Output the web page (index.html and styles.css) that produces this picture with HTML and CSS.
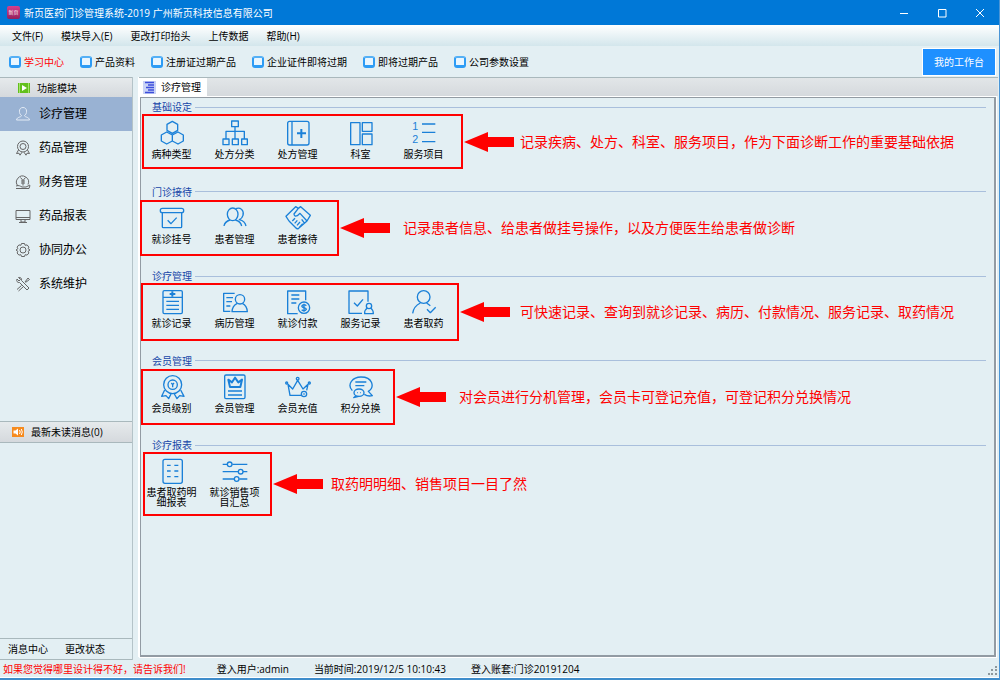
FILE: index.html
```html
<!DOCTYPE html>
<html lang="zh-CN">
<head>
<meta charset="utf-8">
<title>新页医药门诊管理系统-2019</title>
<link rel="stylesheet" href="styles.css">
</head>
<body>
<div class="window">
  <header class="titlebar">
    <span class="app-icon">新页</span>
    <h1 class="app-title">新页医药门诊管理系统-2019 广州新页科技信息有限公司</h1>
    <button class="win-btn" aria-label="最小化"><svg viewBox="0 0 10 10"><path d="M1 5.5h8"/></svg></button>
    <button class="win-btn" aria-label="最大化"><svg viewBox="0 0 10 10"><path d="M1.5 1.5h7.500v7.500h-7.500z"/></svg></button>
    <button class="win-btn" aria-label="关闭"><svg viewBox="0 0 10 10"><path d="M1 1l8 8M9 1l-8 8"/></svg></button>
  </header>

  <nav class="menubar">
    <button>文件(F)</button>
    <button>模块导入(E)</button>
    <button>更改打印抬头</button>
    <button>上传数据</button>
    <button>帮助(H)</button>
  </nav>

  <div class="toolbar">
    <button class="tool tool-hot"><i class="tool-icon"></i>学习中心</button>
    <button class="tool"><i class="tool-icon"></i>产品资料</button>
    <button class="tool"><i class="tool-icon"></i>注册证过期产品</button>
    <button class="tool"><i class="tool-icon"></i>企业证件即将过期</button>
    <button class="tool"><i class="tool-icon"></i>即将过期产品</button>
    <button class="tool"><i class="tool-icon"></i>公司参数设置</button>
    <button class="desk-btn">我的工作台</button>
  </div>

  <div class="body">
    <aside class="sidebar">
      <h2 class="side-head side-head-modules">
        <svg class="head-icon" viewBox="0 0 12 12"><path fill="#62c01c" d="M0 1h12v10H0z"/><path fill="#a5e36c" d="M1 1h1v10H1zM10 1h1v10h-1z"/><path fill="#fff" d="M4 3l5 3-5 3z"/></svg>
        功能模块
      </h2>
      <nav class="modules">
        <div class="module-list">
          <button class="module module-active"><svg viewBox="0 0 16 16"><path d="M8 1.500c5 0 4 7 1.500 8 0 2 4.500 1 5 4.500h-13c.5-3.500 5-2.500 5-4.500C4 8.500 3 1.500 8 1.500z"/></svg>诊疗管理</button>
          <button class="module"><svg viewBox="0 0 16 16"><circle cx="8" cy="6.500" r="5.500"/><circle cx="8" cy="6.500" r="3"/><path d="M3.500 10l-2 3.500 2.500-.3 1 2 2-3M12.500 10l2 3.500-2.500-.3-1 2-2-3"/></svg>药品管理</button>
          <button class="module"><svg viewBox="0 0 16 16"><path d="M3 12A6 6 0 1 1 13 10.500M5.500 3.500L8 6.500l2.500-3M8 6.500v5M6 7h4M6 9h4M1 12c3-1 4 0 6 1h4l4-2M1 14.500h13l1-3"/></svg>财务管理</button>
          <button class="module"><svg viewBox="0 0 16 16"><path d="M1 2.500h14v9H1zM1 9.500h14M6 11.500v2.500h4v-2.500M4 14.500h8"/></svg>药品报表</button>
          <button class="module"><svg viewBox="0 0 16 16"><circle cx="8" cy="8" r="3"/><path d="M6.500 1.500h3l.6 1.800 2-.4 1.800 2.200-.8 1.600 1.900 1.300-1.900 1.300.8 1.700-1.800 2.100-2-.4-.6 1.800h-3l-.6-1.800-2 .4-1.800-2.100.8-1.700L1 8l1.900-1.300-.8-1.600 1.800-2.200 2 .4z"/></svg>协同办公</button>
          <button class="module"><svg viewBox="0 0 16 16"><path d="M2 3l2 2 1.500-1.500-2-2c2-.5 3.500 1 3 3L14 12l-2 2-7.500-7.500C2.500 7 1 5 2 3zM10 6l3-4 1.500 1.500-4 3M6.500 9.500l-4.500 4M8 11l-4.500 4"/></svg>系统维护</button>
        </div>
      </nav>
      <h2 class="side-head side-head-messages">
        <svg class="head-icon" viewBox="0 0 12 12"><path fill="#f68b1f" d="M0 1h12v10H0z"/><path fill="#fff" d="M1.500 4.500h2L6 2.500v7L3.500 7.500h-2z"/><path d="M7.500 4q1.500 2 0 4M9.300 3q2 3 0 6" fill="none" stroke="#fff"/></svg>
        最新未读消息(0)
      </h2>
      <div class="messages"></div>
      <div class="side-foot"><button>消息中心</button><button>更改状态</button></div>
    </aside>

    <main class="workspace">
      <div class="tabs">
        <button class="tab">
          <svg viewBox="0 0 13 13"><path fill="#c9d3f6" d="M0 0h13v13H0z"/><path stroke="#3d4edb" stroke-width="1.500" d="M2 1.500h9M5 4h6M3 6.500h8M5 9h6M2 11.500h9"/></svg>
          诊疗管理
        </button>
      </div>

      <div class="panel">
        <div class="groups">
          <section class="group">
            <h3>基础设定</h3>
            <div class="items">
              <button class="item"><svg viewBox="0 0 78 78"><path d="M40 4l16 9v18l-16 9-16-9V13zM23 36l17 9v18l-17 9-16-9V45zM57 36l16 9v18l-16 9-17-9V45z"/></svg><span>病种类型</span></button>
              <button class="item"><svg viewBox="0 0 78 78"><path d="M29 3h20v17H29zM39 20v36M12 56V34h55v22M3 57h18v17H3zM31 57h18v17H31zM59 57h17v17H59z"/></svg><span>处方分类</span></button>
              <button class="item"><svg viewBox="0 0 78 78"><rect x="8" y="4" width="64" height="71" rx="6"/><path d="M21 4v71"/><path class="bold" d="M36 40h27M49 27v27"/></svg><span>处方管理</span></button>
              <button class="item"><svg viewBox="0 0 78 78"><path d="M8 8h28v66H8zM43 8h29v26H43zM43 42h29v32H43z"/></svg><span>科室</span></button>
              <button class="item"><svg viewBox="0 0 78 78"><text x="4" y="31">1</text><text x="4" y="70">2</text><path d="M33 12h40M33 37h40M33 65h40"/></svg><span>服务项目</span></button>
            </div>
          </section>

          <section class="group">
            <h3>门诊接待</h3>
            <div class="items">
              <button class="item"><svg viewBox="0 0 78 78"><rect x="4" y="10" width="70" height="13" rx="6"/><path d="M10 23v42q0 3 3 3h52q3 0 3-3V23M26 46l10 10 17-18"/></svg><span>就诊挂号</span></button>
              <button class="item"><svg viewBox="0 0 78 78"><ellipse cx="32" cy="28" rx="16" ry="19"/><path d="M6 63q2-13 18-18M40 45q16 4 19 18M41 11c14-6 26 5 22 20-2 7-6 11-11 13 12 3 18 9 20 19"/></svg><span>患者管理</span></button>
              <button class="item"><svg viewBox="0 0 78 78"><path d="M40 10l-8-5-29 29 9 14M40 10l7-5 29 26-10 17-25 22q-5 3-8-1L12 48M40 10L27 27q1 9 10 5l8-7 21 23M29 55l8-9M36 61l9-10M43 67l10-11M22 48l8-8M50 43l9 12"/></svg><span>患者接待</span></button>
            </div>
          </section>

          <section class="group">
            <h3>诊疗管理</h3>
            <div class="items">
              <button class="item"><svg viewBox="0 0 78 78"><rect x="12" y="5" width="58" height="69" rx="4"/><path d="M12 25h58M22 37h38M22 49h38M22 61h38"/><path class="bold" d="M32 15h17M40 7v16"/></svg><span>就诊记录</span></button>
              <button class="item"><svg viewBox="0 0 78 78"><path d="M38 13H5v54h20M13 26h20M13 38h17M13 51h12"/><circle cx="54" cy="31" r="14"/><path d="M46 43q-15 7-16 25h46q-1-18-15-25"/></svg><span>病历管理</span></button>
              <button class="item"><svg viewBox="0 0 78 78"><path d="M38 74H8V6h54v28M19 18h24M19 30h24M19 42h15"/><circle cx="57" cy="56" r="17"/><path d="M64 50q-7-6-13 0c-3 7 13 5 13 11q-6 8-14 1M57 44v24"/></svg><span>就诊付款</span></button>
              <button class="item"><svg viewBox="0 0 78 78"><path d="M42 73H3V6h57v32M18 41l10 10 17-20"/><circle cx="63" cy="51" r="8"/><path d="M58 57q-9 6-8 17h26q0-11-8-17"/></svg><span>服务记录</span></button>
              <button class="item"><svg viewBox="0 0 78 78"><circle cx="38" cy="24" r="19"/><path d="M5 73q3-21 23-31M47 42l11 8M48 61l10 10 16-16"/></svg><span>患者取药</span></button>
            </div>
          </section>

          <section class="group">
            <h3>会员管理</h3>
            <div class="items">
              <button class="item"><svg viewBox="0 0 78 78"><circle cx="41" cy="32" r="27"/><circle cx="41" cy="32" r="14"/><path d="M37 27l4 5 4-5M41 32v8M17 48L8 67l13-2 8 9 7-14M65 48l10 19-13-2-8 9-8-14"/></svg><span>会员级别</span></button>
              <button class="item"><svg viewBox="0 0 78 78"><rect x="8" y="3" width="61" height="71" rx="4"/><path class="bold" d="M24 39l-5-22 11 8 9-14 10 14 11-8-5 22z"/><path d="M18 51h42M18 63h42"/></svg><span>会员管理</span></button>
              <button class="item"><svg viewBox="0 0 78 78"><circle cx="5" cy="27" r="3"/><circle cx="38" cy="14" r="4"/><circle cx="73" cy="27" r="3"/><path d="M48 64H15L9 31l14 14 15-26 16 26 15-14-4 18"/><circle cx="57" cy="60" r="8"/><path d="M55 60h4"/></svg><span>会员充值</span></button>
              <button class="item"><svg viewBox="0 0 78 78"><path d="M13 50C-5 30 15 9 39 9c35 0 42 30 22 43l12 13c-9 2-18 0-24-4M22 24h33M22 35h27"/><ellipse cx="33" cy="56" rx="15" ry="11"/><path d="M24 65l-7 6 15-4M27 56h2M36 56h2"/></svg><span>积分兑换</span></button>
            </div>
          </section>

          <section class="group">
            <h3>诊疗报表</h3>
            <div class="items">
              <button class="item"><svg viewBox="0 0 78 78"><rect x="12" y="4" width="58" height="72" rx="6"/><path d="M24 22h11M46 22h12M24 39h11M46 39h12M24 56h11M46 56h12"/></svg><span>患者取药明细报表</span></button>
              <button class="item"><svg viewBox="0 0 78 78"><path d="M2 19h14M31 19h45M2 41h46M63 41h13M2 63h34M52 63h24"/><circle cx="23" cy="19" r="7"/><circle cx="56" cy="41" r="7"/><circle cx="44" cy="63" r="7"/></svg><span>就诊销售项目汇总</span></button>
            </div>
          </section>
        </div>

        <div class="note note-base"><p><svg viewBox="0 0 50 20"><path d="M0 10L24 0v5h26v10H24v5z"/></svg>记录疾病、处方、科室、服务项目，作为下面诊断工作的重要基础依据</p></div>
        <div class="note note-reception"><p><svg viewBox="0 0 50 20"><path d="M0 10L24 0v5h26v10H24v5z"/></svg>记录患者信息、给患者做挂号操作，以及方便医生给患者做诊断</p></div>
        <div class="note note-treatment"><p><svg viewBox="0 0 50 20"><path d="M0 10L24 0v5h26v10H24v5z"/></svg>可快速记录、查询到就诊记录、病历、付款情况、服务记录、取药情况</p></div>
        <div class="note note-member"><p><svg viewBox="0 0 50 20"><path d="M0 10L24 0v5h26v10H24v5z"/></svg>对会员进行分机管理，会员卡可登记充值，可登记积分兑换情况</p></div>
        <div class="note note-report"><p><svg viewBox="0 0 50 20"><path d="M0 10L24 0v5h26v10H24v5z"/></svg>取药明明细、销售项目一目了然</p></div>
      </div>
    </main>
  </div>

  <footer class="statusbar">
    <span class="feedback">如果您觉得哪里设计得不好，请告诉我们!</span>
    <span>登入用户:admin</span>
    <span>当前时间:2019/12/5 10:10:43</span>
    <span>登入账套:门诊20191204</span>
    <svg class="grip" viewBox="0 0 9 9"><path d="M7 0h2v2H7zM3 3h2v2H3zM7 3h2v2H7zM0 7h2v2H0zM3 7h2v2H3zM7 7h2v2H7z"/></svg>
  </footer>
</div>
</body>
</html>
```

FILE: styles.css
```css
* { box-sizing: border-box; }

body {
  margin: 0;
  font: 10px/12px "Open Sans", "Noto Sans CJK SC", sans-serif;
  color: #000;
}

h1, h2, h3, p { margin: 0; font-size: inherit; font-weight: normal; }

button {
  padding: 0;
  border: 0;
  background: none;
  font: inherit;
  color: inherit;
  white-space: nowrap;
}

svg { flex: none; }

.window {
  display: flex;
  flex-direction: column;
  min-height: 100vh;
  background: #e3eff3;
  border-right: 1px solid #4a95d6;
  border-bottom: 2px solid #3f8dcb;
}

/* Title bar */
.titlebar {
  display: flex;
  align-items: center;
  height: 25px;
  padding-left: 7px;
  background: #0078d7;
  color: #fff;
}

.app-icon {
  width: 13px;
  height: 13px;
  border-radius: 2px;
  background: linear-gradient(#d8408c, #93205c);
  font-size: 5px;
  line-height: 12px;
  text-align: center;
}

.app-title { flex: 1; padding-left: 4px; }

.win-btn { width: 38px; height: 24px; }

.win-btn svg {
  display: block;
  width: 10px;
  height: 10px;
  margin: 0 auto;
  fill: none;
  stroke: #fff;
}

/* Menu and toolbar */
.menubar {
  display: flex;
  gap: 18px;
  height: 21px;
  padding-left: 12px;
  background: linear-gradient(#fff, #d3e6ec);
}

.toolbar {
  display: flex;
  align-items: center;
  gap: 16px;
  height: 31px;
  padding: 0 3px 0 9px;
}

.tool { display: flex; align-items: center; gap: 3px; }
.tool-hot { color: #f00; }

.tool-icon {
  width: 12px;
  height: 12px;
  border: 2px solid #2d9cf5;
  border-top-color: #55b0f5;
  border-bottom-width: 3px;
  border-radius: 3px;
  background: #e9f6ff;
}

.desk-btn {
  height: 28px;
  margin-left: auto;
  padding: 0 11px;
  border: 1px solid #fff;
  background: #1e90ff;
  color: #fff;
}

.body { display: flex; flex: 1; }

/* Sidebar */
.sidebar {
  display: flex;
  flex-direction: column;
  width: 133px;
  border-right: 1px solid #b4c3c8;
}

.side-head {
  display: flex;
  align-items: center;
  height: 20px;
  border-top: 1px solid #a9b8bc;
  background: linear-gradient(#e6eaec, #d5d9dd);
}

.side-head-modules { gap: 7px; padding-left: 18px; }
.side-head-messages { gap: 7px; height: 22px; padding-left: 12px; border-bottom: 1px solid #a9b8bc; }
.head-icon { width: 12px; height: 12px; }

.modules { flex: 5; }
.messages { flex: 3; }

.module-list { display: grid; grid-auto-rows: 1fr; height: 204px; }

.module {
  display: flex;
  align-items: center;
  gap: 8px;
  padding-left: 15px;
  font-size: 12px;
}

.module svg { width: 16px; height: 16px; fill: none; stroke: #666; }
.module-active { background: #99b2d3; }
.module-active svg { stroke: #e3ebf6; }

.side-foot {
  display: flex;
  gap: 17px;
  height: 22px;
  padding-left: 8px;
  border-top: 1px solid #a9b8bc;
  border-bottom: 1px solid #a9b8bc;
}

/* Workspace */
.workspace {
  display: flex;
  flex: 1;
  flex-direction: column;
  margin: 0 1px 3px 5px;
  border-left: 1px solid #fff;
}

.tabs {
  display: flex;
  height: 19px;
  border-top: 1px solid #a9b8bc;
  background: linear-gradient(#e2e6e8, #d5d9dd);
}

.tab {
  display: flex;
  align-items: center;
  gap: 5px;
  padding: 0 6px 0 4px;
  background: #fff;
}

.tab svg { width: 13px; height: 13px; fill: none; }

.panel {
  position: relative;
  flex: 1;
  margin: 1px 2px 0 1px;
  border: 1px solid #929ba3;
  border-right-width: 2px;
  border-bottom-width: 2px;
  outline: 1px solid #fff;
}

.groups { display: grid; grid-auto-rows: 1fr; height: 423px; }

.group { padding-top: 3px; }

.group h3 {
  display: flex;
  align-items: center;
  gap: 3px;
  margin: 0 8px 7px 11px;
  color: #1646a8;
}

.group h3::after {
  content: "";
  flex: 1;
  height: 1px;
  background: #a9bfdc;
}

.items { display: flex; margin-left: -1px; }

.item {
  display: flex;
  flex-direction: column;
  align-items: center;
  gap: 3px;
  width: 63px;
  line-height: 10px;
  white-space: normal;
}

.item svg {
  width: 26px;
  height: 26px;
  fill: none;
  stroke: #1a80d8;
  stroke-width: 4;
  stroke-linejoin: round;
}

.item .bold { stroke-width: 6; }
.item text { fill: #1a80d8; stroke: none; font: 32px "Liberation Sans", sans-serif; }
.item span { width: 52px; }

/* Red callouts drawn over the panel */
.note { position: absolute; border: 2px solid #f00; pointer-events: none; }

.note p {
  position: absolute;
  top: 0;
  bottom: 0;
  left: 100%;
  display: flex;
  align-items: center;
  gap: 13px;
  padding-left: 3px;
  color: #f00;
  font-size: 14px;
  line-height: 20px;
  white-space: nowrap;
}

.note svg { width: 50px; height: 20px; fill: #f00; }

.note-base { top: 16px; left: 1px; width: 321px; height: 55px; }
.note-base p { gap: 6px; }
.note-reception { top: 102px; left: -1px; width: 199px; height: 56px; }
.note-treatment { top: 185px; left: 0; width: 318px; height: 58px; }
.note-treatment p { gap: 10px; }
.note-member { top: 271px; left: 0; width: 254px; height: 56px; }
.note-report { top: 354px; left: 2px; width: 129px; height: 64px; }
.note-report p { gap: 8px; }

/* Status bar */
.statusbar {
  display: flex;
  align-items: center;
  gap: 25px;
  height: 18px;
  padding-left: 3px;
  border-bottom: 1px solid #fff;
}

.feedback { margin-right: 6px; color: #f00; }

.grip {
  align-self: flex-end;
  width: 9px;
  height: 9px;
  margin: 0 2px 2px auto;
  fill: #8d989d;
}
```
